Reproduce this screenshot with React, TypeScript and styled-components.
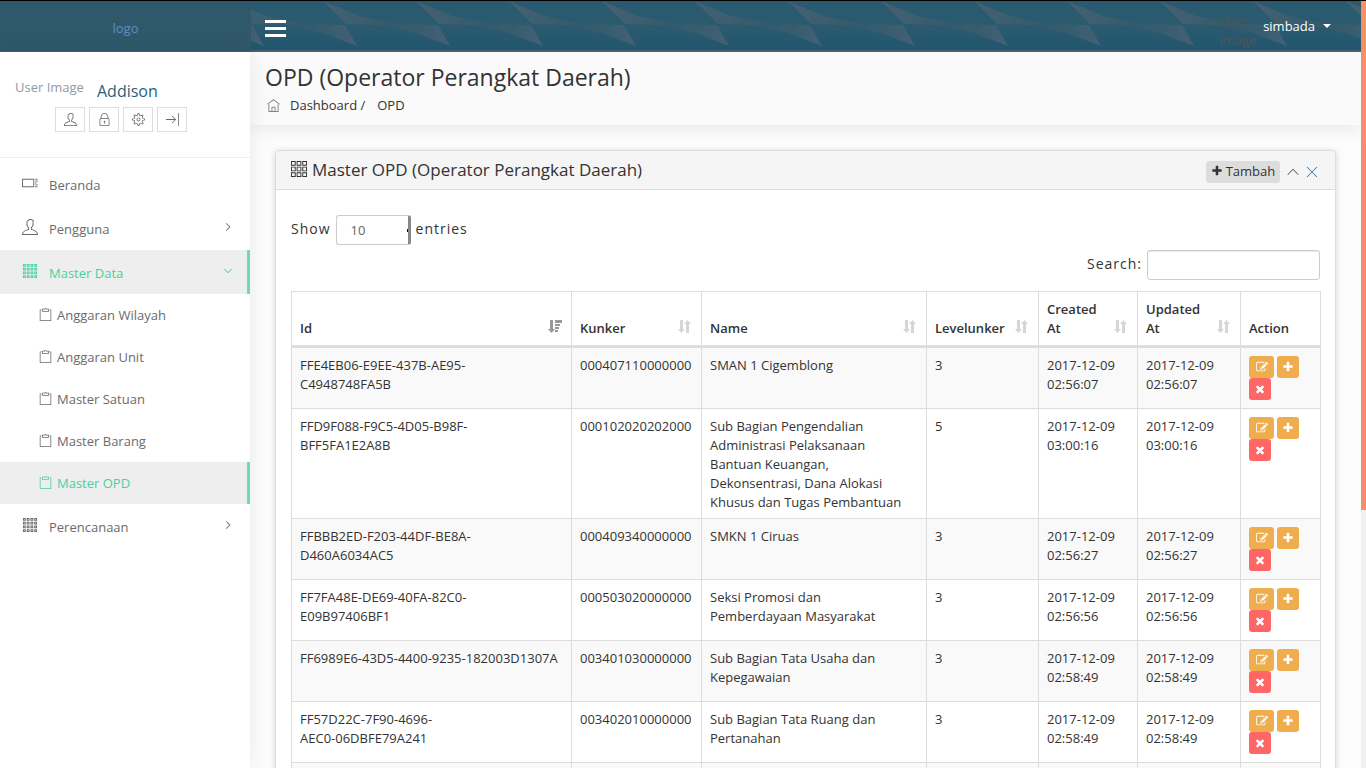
import React from "react";
import styled, { createGlobalStyle } from "styled-components";
import {
  TfiAngleDown,
  TfiAngleRight,
  TfiAngleUp,
  TfiClipboard,
  TfiClose,
  TfiHome,
  TfiLayoutGrid3,
  TfiLayoutGrid4,
  TfiLayoutListLargeImage,
  TfiLock,
  TfiSettings,
  TfiShiftRight,
  TfiUser,
} from "react-icons/tfi";

const GlobalStyle = createGlobalStyle`
  *, *::before, *::after { box-sizing: border-box; }
  html { scrollbar-width: none; }
  body {
    margin: 0;
    background: #fcfcfc;
    color: #333;
    font-family: "Open Sans", sans-serif;
    font-size: 13px;
    line-height: 19px;
  }
  a { color: inherit; text-decoration: none; }
  button, input, select { font-family: inherit; margin: 0; }
  ul, ol { list-style: none; margin: 0; padding: 0; }
  svg { display: block; flex: none; }
`;

/* ---------- page frame ---------- */

const Page = styled.div`
  display: flex;
  flex-direction: column;
  height: 100vh;
  overflow: hidden;
  border-top: 1px solid #000;
  padding-right: 5px;
`;

const TopBar = styled.header`
  display: flex;
  flex: none;
  height: 51px;
`;

const Brand = styled.a`
  display: flex;
  align-items: center;
  justify-content: center;
  width: 251px;
  padding-top: 4px;
  background: #2f586b;
  border-bottom: 1px solid #46606f;
  color: #5b8fc2 !important;
`;

const NavBar = styled.div`
  position: relative;
  flex: 1;
  display: flex;
  align-items: center;
  justify-content: space-between;
  padding: 0 30px 0 14px;
  overflow: hidden;
`;

const NavPattern = styled.svg`
  position: absolute;
  inset: 0;
  width: 100%;
  height: 100%;
`;

const MenuToggle = styled.button`
  position: relative;
  display: flex;
  flex-direction: column;
  gap: 4px;
  padding: 4px 0 0;
  border: 0;
  background: none;
  span { width: 21px; height: 3px; background: #fff; }
`;

const Account = styled.a`
  position: relative;
  display: flex;
  align-items: center;
  gap: 6px;
  color: #fff;
`;

const AvatarAlt = styled.span`
  width: 38px;
  padding-top: 6px;
  line-height: 20px;
  color: #50545a;
`;

const AccountName = styled.span`
  display: flex;
  align-items: center;
  gap: 8px;
  margin-bottom: 1px;
`;

const Columns = styled.div`
  display: flex;
  flex: 1;
  min-height: 0;
`;

const ScrollTrack = styled.div`
  position: fixed;
  top: 1px;
  right: 0;
  bottom: 0;
  width: 5px;
  background: #f0f0f0;
`;

const ScrollThumb = styled.div`
  height: 66.4%;
  background: #f38f69;
`;

/* ---------- sidebar ---------- */

const Sidebar = styled.aside`
  position: relative;
  flex: none;
  width: 250px;
  background: #fff;
  box-shadow: 0 0 20px rgba(0, 0, 0, 0.08);
`;

const Profile = styled.div`
  height: 106px;
  padding: 26px 15px 0;
  border-bottom: 1px solid #eee;
`;

const ProfileTop = styled.div`
  display: flex;
  gap: 9px;
  height: 29px;
`;

const ProfileAlt = styled.span`
  width: 73px;
  color: #8f9aab;
`;

const ProfileName = styled.span`
  padding-top: 4px;
  font-size: 16px;
  color: #2a5f77;
`;

const ProfileActions = styled.div`
  display: flex;
  gap: 4px;
  padding-left: 40px;
`;

const ProfileAction = styled.button`
  display: flex;
  align-items: center;
  justify-content: center;
  width: 30px;
  height: 25px;
  padding: 0;
  border: 1px solid #ddd;
  background: #fff;
  color: #666;
`;

const Menu = styled.ul`
  padding-top: 4px;
`;

const MenuLink = styled.a<{ $active?: boolean }>`
  display: flex;
  align-items: center;
  gap: 11px;
  height: 44px;
  padding: 0 15px 0 22px;
  border-right: 3px solid ${(p) => (p.$active ? "#6cdcb8" : "transparent")};
  background: ${(p) => (p.$active ? "#eee" : "transparent")};
  color: ${(p) => (p.$active ? "#47d1a1" : "#6b6b6b")};
  span { flex: 1; padding-top: 3px; }
  svg { margin-bottom: 2px; }
`;

const SubLink = styled(MenuLink)`
  gap: 5px;
  height: 42px;
  padding-left: 39px;
  span { padding-top: 1px; }
`;

/* ---------- content ---------- */

const Content = styled.main`
  flex: 1;
  min-width: 0;
`;

const ContentHeader = styled.section`
  height: 73px;
  padding: 10px 15px 0;
  background: #fafafa;
  box-shadow: 0 4px 16px rgba(0, 0, 0, 0.08);
`;

const Title = styled.h1`
  margin: 0;
  font-size: 23px;
  line-height: 30px;
  font-weight: 400;
`;

const Crumbs = styled.ol`
  display: flex;
  align-items: center;
  gap: 12px;
  padding: 4px 0 0 2px;
  li { display: flex; align-items: center; }
  svg { margin-right: 10px; color: #666; }
`;

const Card = styled.section`
  margin: 25px;
  border: 1px solid #ddd;
  border-radius: 4px;
  background: #fff;
  box-shadow: 0 1px 6px rgba(0, 0, 0, 0.16);
`;

const CardHeader = styled.div`
  display: flex;
  align-items: center;
  justify-content: space-between;
  height: 39px;
  padding: 0 17px 2px 15px;
  border-bottom: 1px solid #ddd;
  border-radius: 4px 4px 0 0;
  background: #f5f5f5;
`;

const CardTitle = styled.h2`
  display: flex;
  align-items: center;
  gap: 5px;
  margin: 0;
  font-size: 17px;
  font-weight: 400;
`;

const CardTools = styled.div`
  display: flex;
  align-items: center;
  gap: 7px;
  padding-top: 5px;
`;

const AddButton = styled.button`
  display: flex;
  align-items: center;
  justify-content: center;
  gap: 3px;
  width: 74px;
  height: 22px;
  padding: 0 0 1px;
  border: 0;
  border-radius: 3px;
  background: #ddd;
  color: #333;
  font-size: 13px;
`;

const ToolButton = styled.button<{ $link?: boolean }>`
  padding: 0;
  border: 0;
  background: none;
  color: ${(p) => (p.$link ? "#33639a" : "#444")};
`;

const CardBody = styled.div`
  padding: 25px 15px 15px;
`;

const Control = styled.label<{ $end?: boolean }>`
  display: flex;
  align-items: center;
  justify-content: ${(p) => (p.$end ? "flex-end" : "flex-start")};
  gap: 5px;
  height: 30px;
  margin-bottom: ${(p) => (p.$end ? 11 : 5)}px;
  font-size: 14px;
  letter-spacing: 1px;
`;

const ControlText = styled.span`
  padding-bottom: 3px;
`;

const LengthSelect = styled.select`
  appearance: none;
  width: 75px;
  height: 30px;
  padding: 0 14px;
  border: 1px solid #ccc;
  border-right: 3px solid #888;
  border-radius: 3px;
  background: linear-gradient(#000, #000) right center / 1px 3px no-repeat #fff;
  color: #666;
  font-size: 13px;
`;

const SearchInput = styled.input`
  width: 173px;
  height: 30px;
  padding: 5px 10px;
  border: 1px solid #ccc;
  border-radius: 3px;
  box-shadow: inset 0 1px 1px rgba(0, 0, 0, 0.08);
  font-size: 12px;
`;

/* ---------- table ---------- */

const Table = styled.table`
  width: 100%;
  table-layout: fixed;
  border-collapse: collapse;
  th, td { border: 1px solid #ddd; text-align: left; }
  tbody tr:nth-child(odd) { background: #f9f9f9; }
`;

const Th = styled.th`
  padding: 8px 8px 7px;
  border-bottom-width: 3px !important;
  font-weight: 600;
  vertical-align: bottom;
`;

const ThInner = styled.div`
  display: flex;
  align-items: flex-end;
  justify-content: space-between;
  gap: 7px;
`;

const Td = styled.td`
  padding: 8px 8px 6px;
  vertical-align: top;
  white-space: pre-line;
`;

const ActionTd = styled.td`
  padding: 8px;
  vertical-align: top;
`;

const Actions = styled.div`
  display: flex;
  flex-wrap: wrap;
  column-gap: 3px;
`;

const ActionButton = styled.button<{ $danger?: boolean; $wide?: boolean }>`
  display: flex;
  align-items: center;
  justify-content: center;
  width: ${(p) => (p.$wide ? 25 : 22)}px;
  height: 22px;
  padding: 0;
  border: 0;
  border-radius: 3px;
  background: ${(p) => (p.$danger ? "#ff6666" : "#f0ad4e")};
  color: #fff;
`;

/* ---------- icons ---------- */

const GLYPHS = {
  plus: "M1600 736v192q0 40-28 68t-68 28h-416v416q0 40-28 68t-68 28H800q-40 0-68-28t-28-68v-416H288q-40 0-68-28t-28-68V736q0-40 28-68t68-28h416V224q0-40 28-68t68-28h192q40 0 68 28t28 68v416h416q40 0 68 28t28 68z",
  times:
    "M1490 1322q0 40-28 68l-136 136q-28 28-68 28t-68-28l-294-294-294 294q-28 28-68 28t-68-28l-136-136q-28-28-28-68t28-68l294-294-294-294q-28-28-28-68t28-68l136-136q28-28 68-28t68 28l294 294 294-294q28-28 68-28t68 28l136 136q28 28 28 68t-28 68l-294 294 294 294q28 28 28 68z",
  edit: "M888 1184l116-116-152-152-116 116v56h96v96h56zM1328 464q-16-16-33 1L945 815q-17 17-1 33t33-1l350-350q17-17 1-33zM1408 1058v190q0 119-84 203T1120 1536H288q-119 0-204-85T0 1248V416q0-119 84-203T288 128h832q63 0 117 25 15 7 18 23 3 17-9 29l-49 49q-14 14-32 8-23-6-45-6H288q-66 0-113 47t-47 113v832q0 66 47 113t113 47h832q66 0 113-47t47-113v-126q0-13 9-22l64-64q15-15 35-7t20 29zM1312 320l288 288-672 672H640V992zM1756 452l-92 92-288-288 92-92q28-28 68-28t68 28l152 152q28 28 28 68t-28 68z",
};

function Glyph({ name, size }: { name: keyof typeof GLYPHS; size: number }) {
  return (
    <svg width={size} height={size} viewBox="0 0 1792 1792" fill="currentColor" aria-hidden="true">
      <path d={GLYPHS[name]} />
    </svg>
  );
}

function SortIcon({ active }: { active?: boolean }) {
  return active ? (
    <svg width="15" height="19" viewBox="0 0 15 19" fill="#999" aria-hidden="true">
      <path d="M2 1h3v9h2l-3.500 4L0 10h2z" />
      <path d="M7 1h7v3H7zM7 5h5v2H7zM7 8h4v2H7zM7 11h3v2H7z" />
    </svg>
  ) : (
    <svg width="15" height="19" viewBox="0 0 15 19" fill="#d6d6d6" aria-hidden="true">
      <path d="M2 1h3v9h2l-3.500 4L0 10h2z" />
      <path d="M8 14h3V5h2L9.500 1 6 5h2z" />
    </svg>
  );
}

function Waves() {
  return (
    <NavPattern aria-hidden="true">
      <defs>
        <linearGradient id="sea" x1="0" y1="0" x2="0" y2="1">
          <stop offset="0" stopColor="#2a5a70" />
          <stop offset="0.500" stopColor="#2b5a6e" />
          <stop offset="1" stopColor="#20566e" />
        </linearGradient>
        <linearGradient id="fin" x1="0" y1="0" x2="127" y2="44" gradientUnits="userSpaceOnUse">
          <stop offset="0" stopColor="#506371" />
          <stop offset="0.300" stopColor="#425f6f" />
          <stop offset="0.550" stopColor="#355a6c" />
          <stop offset="0.750" stopColor="#3c5d6f" />
          <stop offset="1" stopColor="#506376" />
        </linearGradient>
        <pattern id="fins" x="72" y="0" width="93" height="51" patternUnits="userSpaceOnUse">
          {[-93, 0].map((x) => (
            <path
              key={x}
              transform={`translate(${x} 0)`}
              d="M0 0L36 15L75 23L115 24L127 45L93 32L55 24L23 23Z"
              fill="url(#fin)"
            />
          ))}
        </pattern>
      </defs>
      <rect width="100%" height="100%" fill="url(#sea)" />
      <rect width="100%" height="100%" fill="url(#fins)" opacity="0.750" />
      <rect y="49" width="100%" height="2" fill="#48606f" />
    </NavPattern>
  );
}

/* ---------- data ---------- */

const columns = [
  { label: "Id", width: 280, sort: true, active: true },
  { label: "Kunker", width: 130, sort: true },
  { label: "Name", width: 225, sort: true },
  { label: "Levelunker", width: 112, sort: true },
  { label: "Created At", width: 99, sort: true },
  { label: "Updated At", width: 103, sort: true },
  { label: "Action", width: 80 },
];

const rows = [
  ["FFE4EB06-E9EE-437B-AE95-\nC4948748FA5B", "000407110000000", "SMAN 1 Cigemblong", "3", "2017-12-09 02:56:07"],
  [
    "FFD9F088-F9C5-4D05-B98F-\nBFF5FA1E2A8B",
    "000102020202000",
    "Sub Bagian Pengendalian Administrasi Pelaksanaan Bantuan Keuangan, Dekonsentrasi, Dana Alokasi Khusus dan Tugas Pembantuan",
    "5",
    "2017-12-09 03:00:16",
  ],
  ["FFBBB2ED-F203-44DF-BE8A-\nD460A6034AC5", "000409340000000", "SMKN 1 Ciruas", "3", "2017-12-09 02:56:27"],
  ["FF7FA48E-DE69-40FA-82C0-\nE09B97406BF1", "000503020000000", "Seksi Promosi dan\nPemberdayaan Masyarakat", "3", "2017-12-09 02:56:56"],
  ["FF6989E6-43D5-4400-9235-182003D1307A", "003401030000000", "Sub Bagian Tata Usaha dan Kepegawaian", "3", "2017-12-09 02:58:49"],
  ["FF57D22C-7F90-4696-\nAEC0-06DBFE79A241", "003402010000000", "Sub Bagian Tata Ruang dan Pertanahan", "3", "2017-12-09 02:58:49"],
  ["", "", "", "", ""],
];

const subItems = ["Anggaran Wilayah", "Anggaran Unit", "Master Satuan", "Master Barang", "Master OPD"];

const profileActions = [
  { label: "Profile", Icon: TfiUser },
  { label: "Lock", Icon: TfiLock },
  { label: "Settings", Icon: TfiSettings },
  { label: "Log out", Icon: TfiShiftRight },
];

export default function App() {
  return (
    <>
      <GlobalStyle />
      <Page>
        <TopBar>
          <Brand href="#">logo</Brand>
          <NavBar>
            <Waves />
            <MenuToggle aria-label="Toggle menu">
              <span />
              <span />
              <span />
            </MenuToggle>
            <Account href="#">
              <AvatarAlt>User Image</AvatarAlt>
              <AccountName>
                simbada
                <svg width="8" height="4" viewBox="0 0 8 4" fill="#fff" aria-hidden="true">
                  <path d="M0 0h8L4 4z" />
                </svg>
              </AccountName>
            </Account>
          </NavBar>
        </TopBar>

        <Columns>
          <Sidebar>
            <Profile>
              <ProfileTop>
                <ProfileAlt>User Image</ProfileAlt>
                <ProfileName>Addison</ProfileName>
              </ProfileTop>
              <ProfileActions>
                {profileActions.map(({ label, Icon }) => (
                  <ProfileAction key={label} aria-label={label}>
                    <Icon size={13} />
                  </ProfileAction>
                ))}
              </ProfileActions>
            </Profile>
            <nav>
              <Menu>
                <li>
                  <MenuLink href="#">
                    <TfiLayoutListLargeImage size={16} />
                    <span>Beranda</span>
                  </MenuLink>
                </li>
                <li>
                  <MenuLink href="#">
                    <TfiUser size={16} />
                    <span>Pengguna</span>
                    <TfiAngleRight size={8} strokeWidth={1} />
                  </MenuLink>
                </li>
                <li>
                  <MenuLink href="#" $active>
                    <TfiLayoutGrid4 size={16} />
                    <span>Master Data</span>
                    <TfiAngleDown size={8} strokeWidth={1} />
                  </MenuLink>
                  <ul>
                    {subItems.map((item) => (
                      <li key={item}>
                        <SubLink href="#" $active={item === "Master OPD"}>
                          <TfiClipboard size={13} />
                          <span>{item}</span>
                        </SubLink>
                      </li>
                    ))}
                  </ul>
                </li>
                <li>
                  <MenuLink href="#">
                    <TfiLayoutGrid4 size={16} />
                    <span>Perencanaan</span>
                    <TfiAngleRight size={8} strokeWidth={1} />
                  </MenuLink>
                </li>
              </Menu>
            </nav>
          </Sidebar>

          <Content>
            <ContentHeader>
              <Title>OPD (Operator Perangkat Daerah)</Title>
              <Crumbs>
                <li>
                  <TfiHome size={13} />
                  <a href="#">Dashboard /</a>
                </li>
                <li>OPD</li>
              </Crumbs>
            </ContentHeader>

            <Card>
              <CardHeader>
                <CardTitle>
                  <TfiLayoutGrid3 size={16} />
                  Master OPD (Operator Perangkat Daerah)
                </CardTitle>
                <CardTools>
                  <AddButton>
                    <Glyph name="plus" size={12} />
                    Tambah
                  </AddButton>
                  <ToolButton aria-label="Collapse">
                    <TfiAngleUp size={12} />
                  </ToolButton>
                  <ToolButton aria-label="Close" $link>
                    <TfiClose size={12} />
                  </ToolButton>
                </CardTools>
              </CardHeader>
              <CardBody>
                <Control>
                  <ControlText>Show</ControlText>
                  <LengthSelect defaultValue="10">
                    <option>10</option>
                    <option>25</option>
                    <option>50</option>
                    <option>100</option>
                  </LengthSelect>
                  <ControlText>entries</ControlText>
                </Control>
                <Control $end>
                  <ControlText>Search:</ControlText>
                  <SearchInput type="search" />
                </Control>
                <Table>
                  <colgroup>
                    {columns.map((c) => (
                      <col key={c.label} width={c.width} />
                    ))}
                  </colgroup>
                  <thead>
                    <tr>
                      {columns.map((c) => (
                        <Th key={c.label} scope="col">
                          <ThInner>
                            {c.label}
                            {c.sort && <SortIcon active={c.active} />}
                          </ThInner>
                        </Th>
                      ))}
                    </tr>
                  </thead>
                  <tbody>
                    {rows.map(([id, kunker, name, level, date]) => (
                      <tr key={id}>
                        <Td>{id}</Td>
                        <Td>{kunker}</Td>
                        <Td>{name}</Td>
                        <Td>{level}</Td>
                        <Td>{date}</Td>
                        <Td>{date}</Td>
                        <ActionTd>
                          <Actions>
                            <ActionButton $wide aria-label="Edit">
                              <Glyph name="edit" size={12} />
                            </ActionButton>
                            <ActionButton aria-label="Add">
                              <Glyph name="plus" size={12} />
                            </ActionButton>
                            <ActionButton $danger aria-label="Delete">
                              <Glyph name="times" size={12} />
                            </ActionButton>
                          </Actions>
                        </ActionTd>
                      </tr>
                    ))}
                  </tbody>
                </Table>
              </CardBody>
            </Card>
          </Content>
        </Columns>
        <ScrollTrack>
          <ScrollThumb />
        </ScrollTrack>
      </Page>
    </>
  );
}
